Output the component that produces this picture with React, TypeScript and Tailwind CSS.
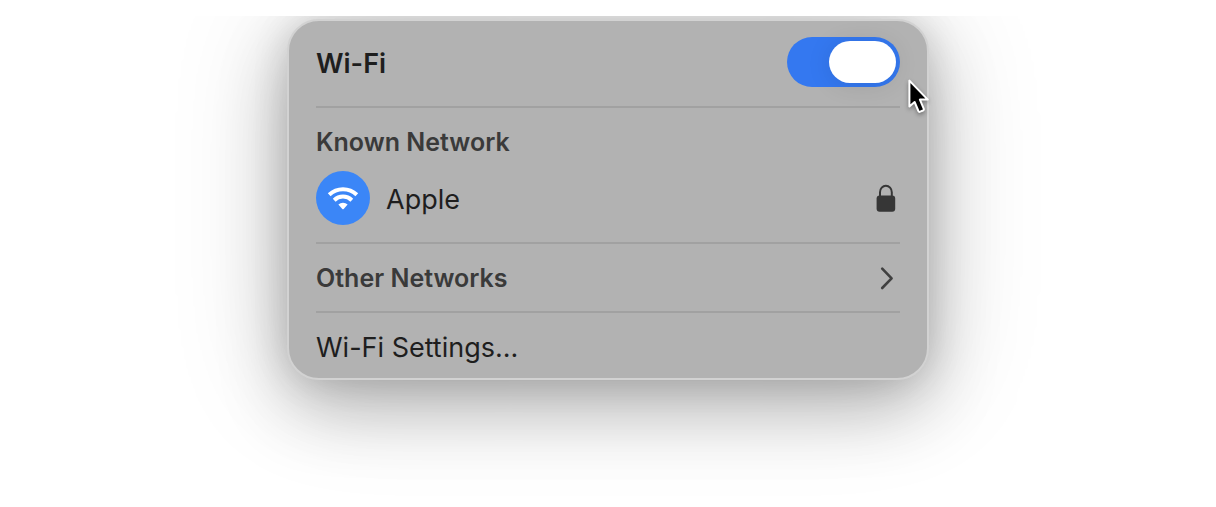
import { useState } from "react";

function WifiIcon() {
  return (
    <svg viewBox="0 0 32 24" className="h-6 w-8" fill="none" aria-hidden="true">
      <path d="M2.200 8.800a20 20 0 0 1 27.600 0" stroke="#fff" strokeWidth="4" />
      <path d="M7.200 14.200a12.600 12.600 0 0 1 17.600 0" stroke="#fff" strokeWidth="4" />
      <path d="M11.400 18.600a6.600 6.600 0 0 1 9.200 0L16.700 23a1 1 0 0 1-1.400 0z" fill="#fff" />
    </svg>
  );
}

function LockIcon() {
  return (
    <svg viewBox="0 0 20 28" className="h-7 w-5" fill="none" role="img" aria-label="Secured">
      <path d="M4 13V8.200a5.900 6.400 0 0 1 11.800 0V13" stroke="#363636" strokeWidth="2" />
      <rect x="0.600" y="11.600" width="18.600" height="16.200" rx="3" fill="#363636" />
    </svg>
  );
}

function ChevronIcon() {
  return (
    <svg viewBox="0 0 14 24" className="h-6 w-3.5" fill="none" aria-hidden="true">
      <path d="M2.200 2.600L11.600 12.400L2.200 22" stroke="#404040" strokeWidth="2.600" strokeLinecap="round" strokeLinejoin="round" />
    </svg>
  );
}

function Pointer() {
  return (
    <svg
      viewBox="0 0 24 38"
      className="pointer-events-none absolute top-14 right-[-2px] h-[38px] w-6 drop-shadow-[0_2px_2px_rgba(0,0,0,0.35)]"
      aria-hidden="true"
    >
      <path
        d="M4.400 3.600v26l5.200-4.600 3.800 9a1.400 1.400 0 0 0 1.800.7l2.800-1.200a1.400 1.400 0 0 0 .7-1.800L14.900 22.600h7.900z"
        fill="#000"
        stroke="#fff"
        strokeWidth="2"
        strokeLinejoin="round"
      />
    </svg>
  );
}

export default function App() {
  const [on, setOn] = useState(true);

  return (
    <div className="bg-white pt-4 font-[Inter,sans-serif]">
      <main className="overflow-hidden px-4 pt-[3px] pb-32">
        <section
          aria-label="Wi-Fi menu"
          className="relative mx-auto max-w-[642px] rounded-[32px] border-2 border-[#d2d2d2] bg-[#b2b2b2] px-[27px] text-[#1e1e1e] shadow-[0_28px_70px_rgba(0,0,0,0.24),0_4px_120px_rgba(0,0,0,0.16),0_0_36px_rgba(0,0,0,0.12)]"
        >
          <div className="flex items-center justify-between border-b-2 border-[#a1a1a1] pt-4 pb-[19px]">
            <label htmlFor="wifi" className="pt-1 text-[27px] leading-8 font-semibold">
              Wi-Fi
            </label>
            <input
              id="wifi"
              type="checkbox"
              role="switch"
              checked={on}
              onChange={(e) => setOn(e.target.checked)}
              className="flex h-[50px] w-[113px] appearance-none items-center rounded-full bg-[#8f8f8f] px-1 before:h-[42px] before:w-[67px] before:rounded-full before:bg-white before:shadow-[0_2px_24px_rgba(0,0,0,0.1)] checked:justify-end checked:bg-[#3478f0]"
            />
          </div>

          <div className="border-b-2 border-[#a1a1a1] pt-[18px] pb-[17px]">
            <h2 className="text-[25px] leading-8 font-semibold text-[#3a3a3a]">Known Network</h2>
            <button type="button" className="mt-[13px] flex w-full items-center text-left">
              <span className="flex size-[54px] items-center justify-center rounded-full bg-[#3b86f7]">
                <WifiIcon />
              </span>
              <span className="ml-4 flex-1 pt-1 text-[27px] leading-8">Apple</span>
              <span className="mr-1">
                <LockIcon />
              </span>
            </button>
          </div>

          <button
            type="button"
            className="flex h-[69px] w-full items-center justify-between border-b-2 border-[#a1a1a1] text-left text-[25px] leading-8 font-semibold text-[#3a3a3a]"
          >
            Other Networks
            <span className="mr-1.5">
              <ChevronIcon />
            </span>
          </button>

          <a href="#settings" className="block pt-[19px] pb-3.5 text-[27px] leading-8">
            Wi-Fi Settings...
          </a>

          <Pointer />
        </section>
      </main>
    </div>
  );
}
